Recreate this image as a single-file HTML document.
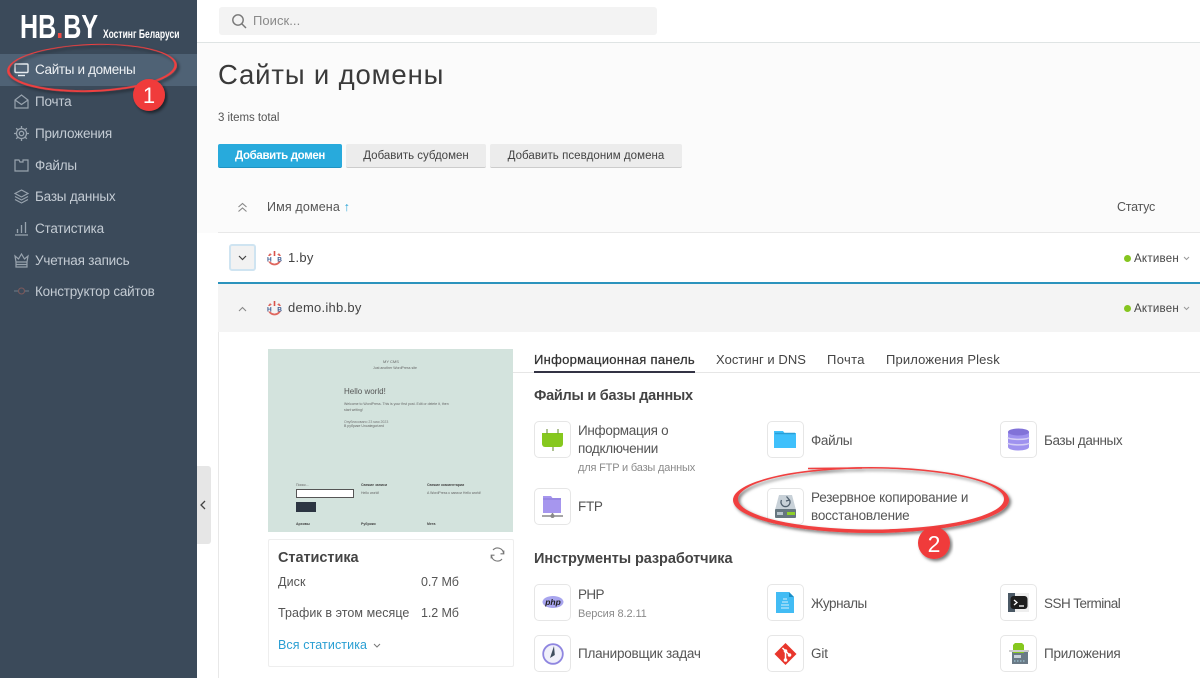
<!DOCTYPE html>
<html lang="ru"><head><meta charset="utf-8"><title>Сайты и домены</title>
<style>
html,body{margin:0;padding:0}
body{width:1200px;height:678px;overflow:hidden;position:relative;background:#fff;font-family:"Liberation Sans",sans-serif;color:#4b4b4b}
.a,.t{position:absolute}
.t{white-space:nowrap;font-size:13.5px;line-height:18px;color:#555;letter-spacing:-.3px}
.n{left:35px;color:#c3cbd3;font-size:13.5px;letter-spacing:-.2px}
.b{position:absolute;width:35px;height:35px;border:1px solid #e6e6e6;border-radius:5px;background:#fff}
.b svg{position:absolute;left:0;top:0}
.s{color:#8a8a8a;font-size:11px;letter-spacing:-.18px}
.h{font-size:14.5px;font-weight:bold;color:#444}
.btn{position:absolute;top:144px;height:24px;line-height:24px;text-align:center;font-size:11.5px;background:#ececec;border-bottom:1px solid #ccc;box-sizing:border-box;border-radius:2px;color:#444}
svg{display:block}
.ni{position:absolute;left:14px}
</style></head><body>
<div class="a" style="left:197px;top:0;width:1003px;height:233px;background:#fbfbfb"></div>
<div class="a" style="left:197px;top:0;width:1003px;height:42px;background:#fff;border-bottom:1px solid #dfe4e4"></div>
<div class="a" style="left:219px;top:7px;width:438px;height:28px;background:#f3f3f3;border-radius:3px"></div>
<svg class="a" style="left:231px;top:13px" width="16" height="16" viewBox="0 0 16 16" fill="none" stroke="#777" stroke-width="1.4"><circle cx="7" cy="7" r="5.2"/><path d="M11 11l4 4"/></svg>
<div class="t" style="left:253px;top:12px;color:#8a8a8a;font-size:13px;letter-spacing:.05px">Поиск...</div>

<!-- sidebar -->
<div class="a" style="left:0;top:0;width:197px;height:678px;background:#3b4a5a"></div>
<div class="a" style="left:0;top:54px;width:197px;height:32px;background:#4f6275"></div>
<div class="t" style="left:20px;top:9px;color:#fff;font-size:33px;line-height:36px;font-weight:bold;transform:scaleX(.76);transform-origin:0 0;letter-spacing:0">HB<span style="color:#ef4a43">.</span>BY</div>
<div class="t" style="left:103px;top:27px;color:#fff;font-size:12px;line-height:14px;font-weight:bold;transform:scaleX(.71);transform-origin:0 0;letter-spacing:0">Хостинг Беларуси</div>

<svg class="ni" style="top:63px" width="15" height="14" viewBox="0 0 15 14" fill="none" stroke="#e6ebef" stroke-width="1.4"><rect x="1" y="1" width="13" height="8.500" rx="1"/><path d="M4 12.500h7"/></svg>
<div class="t n" style="top:61px;color:#eef1f4;letter-spacing:-.35px">Сайты и домены</div>
<svg class="ni" style="top:94px" width="15" height="15" viewBox="0 0 15 15" fill="none" stroke="#98a3ae" stroke-width="1.2"><path d="M1 6l6.500-5L14 6v8H1zM1 6l6.500 4.500L14 6"/></svg>
<div class="t n" style="top:93px">Почта</div>
<svg class="ni" style="top:126px" width="15" height="15" viewBox="0 0 15 15" fill="none" stroke="#98a3ae" stroke-width="1.3"><circle cx="7.500" cy="7.500" r="2.200"/><circle cx="7.500" cy="7.500" r="5"/><path d="M7.500 0v2.500M7.500 12.500V15M0 7.500h2.500M12.500 7.500H15M2.200 2.200l1.800 1.800M11 11l1.800 1.800M2.200 12.800L4 11M11 4l1.800-1.800"/></svg>
<div class="t n" style="top:125px">Приложения</div>
<svg class="ni" style="top:158px" width="15" height="14" viewBox="0 0 15 14" fill="none" stroke="#98a3ae" stroke-width="1.2"><path d="M1 2h4l1 2h3V2h5v11H1z"/></svg>
<div class="t n" style="top:157px">Файлы</div>
<svg class="ni" style="top:189px" width="15" height="15" viewBox="0 0 15 15" fill="none" stroke="#98a3ae" stroke-width="1.2"><path d="M7.500 1L14 4.500 7.500 8 1 4.500zM1 7.500L7.500 11 14 7.500M1 10.500L7.500 14 14 10.500"/></svg>
<div class="t n" style="top:188px">Базы данных</div>
<svg class="ni" style="top:221px" width="15" height="15" viewBox="0 0 15 15" fill="none" stroke="#98a3ae" stroke-width="1.3"><path d="M1 14h13M3.500 12V8M7.500 12V4M11.500 12V1"/></svg>
<div class="t n" style="top:220px">Статистика</div>
<svg class="ni" style="top:253px" width="15" height="15" viewBox="0 0 15 15" fill="none" stroke="#98a3ae" stroke-width="1.2"><path d="M1 3l3.500 3L7.500 1l3 5L14 3l-1 6H2zM2 9v5h11V9M2 11.500h11"/></svg>
<div class="t n" style="top:252px">Учетная запись</div>
<svg class="ni" style="top:285px" width="15" height="12" viewBox="0 0 15 12" fill="none" stroke="#6f7c88" stroke-width="1.100"><path d="M0 6h4M11 6h4"/><circle cx="7.500" cy="6" r="3" stroke="#7c5a5c"/></svg>
<div class="t n" style="top:283px">Конструктор сайтов</div>

<!-- handle -->
<div class="a" style="left:197px;top:466px;width:14px;height:78px;background:#e6e6e6;border-radius:0 3px 3px 0"></div>
<svg class="a" style="left:200px;top:500px" width="6" height="10" viewBox="0 0 6 10" fill="none" stroke="#444" stroke-width="1.300"><path d="M5 1L1 5l4 4"/></svg>

<!-- heading -->
<div class="t" style="left:218px;top:58px;font-size:27.500px;line-height:34px;color:#3a3a3a;letter-spacing:.85px">Сайты и домены</div>
<div class="t" style="left:218px;top:109px;font-size:11.500px;color:#555;letter-spacing:-.05px">3 items total</div>
<div class="btn" style="left:218px;width:124px;background:#28aadc;color:#fff;font-weight:bold;border-bottom-color:#1f93c2;letter-spacing:-.35px">Добавить домен</div>
<div class="btn" style="left:346px;width:140px">Добавить субдомен</div>
<div class="btn" style="left:490px;width:192px;letter-spacing:.05px">Добавить псевдоним домена</div>

<!-- table -->
<svg class="a" style="left:237px;top:202px" width="11" height="11" viewBox="0 0 11 11" fill="none" stroke="#888" stroke-width="1.100"><path d="M1.500 5L5.500 1.500 9.500 5M1.500 9.500L5.500 6 9.500 9.500"/></svg>
<div class="t" style="left:267px;top:198px;font-size:12.500px;color:#555;letter-spacing:.15px">Имя домена <span style="color:#2aa3d5">↑</span></div>
<div class="t" style="left:1117px;top:198px;font-size:12.500px;color:#555;letter-spacing:-.25px">Статус</div>
<div class="a" style="left:218px;top:232px;width:982px;height:1px;background:#e8e8e8"></div>

<div class="a" style="left:229px;top:244px;width:27px;height:27px;background:#f2f2f2;border:2px solid #cfe4f1;border-radius:3px;box-sizing:border-box"></div>
<svg class="a" style="left:238px;top:255px" width="9" height="6" viewBox="0 0 9 6" fill="none" stroke="#444" stroke-width="1.200"><path d="M1 1l3.500 3.500L8 1"/></svg>
<svg class="a" style="left:267px;top:251px" width="15" height="15" viewBox="0 0 15 15"><circle cx="7.500" cy="7.500" r="6" fill="none" stroke="#e0675f" stroke-width="1.800"/><rect x="3.500" y="0" width="8" height="3" fill="#fff"/><rect x="6.700" y="0" width="1.600" height="5" fill="#d9534b"/><rect x="0" y="5" width="15" height="5.500" fill="#fff"/><text x="0" y="10.300" font-family="Liberation Sans" font-size="6.500" font-weight="bold" fill="#3c5a8f">H</text><text x="10.300" y="10.300" font-family="Liberation Sans" font-size="6.500" font-weight="bold" fill="#3c5a8f">B</text></svg>
<div class="t" style="left:288px;top:249px;font-size:13px;color:#444;letter-spacing:.25px">1.by</div>
<div class="a" style="left:1124px;top:255px;width:7px;height:7px;border-radius:50%;background:#85c51f"></div>
<div class="t" style="left:1134px;top:250px;font-size:11.500px;color:#444;letter-spacing:.25px">Активен</div>
<svg class="a" style="left:1183px;top:256px" width="7" height="5" viewBox="0 0 7 5" fill="none" stroke="#999"><path d="M1 1l2.500 2.500L6 1"/></svg>

<div class="a" style="left:218px;top:282px;width:982px;height:50px;background:#f4f4f4;border-top:2px solid #2b93bd;box-sizing:border-box"></div>
<div class="a" style="left:218px;top:332px;width:1px;height:346px;background:#e8e8e8"></div>
<svg class="a" style="left:238px;top:306px" width="9" height="6" viewBox="0 0 9 6" fill="none" stroke="#888" stroke-width="1.100"><path d="M1 5l3.500-3.500L8 5"/></svg>
<svg class="a" style="left:267px;top:301px" width="15" height="15" viewBox="0 0 15 15"><circle cx="7.500" cy="7.500" r="6" fill="none" stroke="#e0675f" stroke-width="1.800"/><rect x="3.500" y="0" width="8" height="3" fill="#f4f4f4"/><rect x="6.700" y="0" width="1.600" height="5" fill="#d9534b"/><rect x="0" y="5" width="15" height="5.500" fill="#f4f4f4"/><text x="0" y="10.300" font-family="Liberation Sans" font-size="6.500" font-weight="bold" fill="#3c5a8f">H</text><text x="10.300" y="10.300" font-family="Liberation Sans" font-size="6.500" font-weight="bold" fill="#3c5a8f">B</text></svg>
<div class="t" style="left:288px;top:299px;font-size:13px;color:#444;letter-spacing:.25px">demo.ihb.by</div>
<div class="a" style="left:1124px;top:305px;width:7px;height:7px;border-radius:50%;background:#85c51f"></div>
<div class="t" style="left:1134px;top:300px;font-size:11.500px;color:#444;letter-spacing:.25px">Активен</div>
<svg class="a" style="left:1183px;top:306px" width="7" height="5" viewBox="0 0 7 5" fill="none" stroke="#999"><path d="M1 1l2.500 2.500L6 1"/></svg>

<!-- preview -->
<div class="a" style="left:268px;top:349px;width:245px;height:183px;background:#d3e3dd;overflow:hidden">
 <div class="t" style="left:115px;top:10px;font-size:4px;line-height:6px;color:#666;letter-spacing:0">MY CMS</div>
 <div class="t" style="left:105px;top:16px;font-size:3.500px;line-height:6px;color:#666;letter-spacing:0">Just another WordPress site</div>
 <div class="t" style="left:76px;top:37px;font-size:8px;line-height:12px;color:#555;letter-spacing:0">Hello world!</div>
 <div class="t" style="left:76px;top:52px;font-size:3.500px;line-height:6px;color:#666;letter-spacing:0">Welcome to WordPress. This is your first post. Edit or delete it, then</div>
 <div class="t" style="left:76px;top:58px;font-size:3.500px;line-height:6px;color:#666;letter-spacing:0">start writing!</div>
 <div class="t" style="left:76px;top:70px;font-size:3.500px;line-height:6px;color:#777;letter-spacing:0">Опубликовано 23 мая 2023</div>
 <div class="t" style="left:76px;top:74px;font-size:3.500px;line-height:6px;color:#666;letter-spacing:0">В рубрике Uncategorized</div>
 <div class="t" style="left:28px;top:133px;font-size:3.500px;line-height:6px;color:#666;letter-spacing:0">Поиск...</div>
 <div class="a" style="left:28px;top:140px;width:58px;height:9px;background:#fff;border:1px solid #555;box-sizing:border-box"></div>
 <div class="a" style="left:28px;top:153px;width:20px;height:10px;background:#2c3542"></div>
 <div class="t" style="left:93px;top:133px;font-size:3.500px;line-height:6px;color:#444;font-weight:bold;letter-spacing:0">Свежие записи</div>
 <div class="t" style="left:93px;top:141px;font-size:3.500px;line-height:6px;color:#666;letter-spacing:0">Hello world!</div>
 <div class="t" style="left:159px;top:133px;font-size:3.500px;line-height:6px;color:#444;font-weight:bold;letter-spacing:0">Свежие комментарии</div>
 <div class="t" style="left:159px;top:141px;font-size:3.500px;line-height:6px;color:#666;letter-spacing:0">A WordPress к записи Hello world!</div>
 <div class="t" style="left:28px;top:172px;font-size:3.500px;line-height:6px;color:#444;font-weight:bold;letter-spacing:0">Архивы</div>
 <div class="t" style="left:93px;top:172px;font-size:3.500px;line-height:6px;color:#444;font-weight:bold;letter-spacing:0">Рубрики</div>
 <div class="t" style="left:159px;top:172px;font-size:3.500px;line-height:6px;color:#444;font-weight:bold;letter-spacing:0">Мета</div>
</div>

<!-- stats -->
<div class="a" style="left:268px;top:539px;width:244px;height:126px;border:1px solid #eee;border-radius:2px"></div>
<div class="t" style="left:278px;top:549px;font-size:14.500px;font-weight:bold;color:#444;letter-spacing:-.05px">Статистика</div>
<svg class="a" style="left:490px;top:547px" width="15" height="15" viewBox="0 0 15 15" fill="none" stroke="#777" stroke-width="1.100"><path d="M13.500 6.500A6 6 0 0 0 3 3M1.500 8.500A6 6 0 0 0 12 12"/><path d="M13.800 3.500v3.300h-3.300M1.200 11.500V8.200h3.300"/></svg>
<div class="t" style="left:278px;top:573px;font-size:12.500px;color:#555;letter-spacing:.1px">Диск</div>
<div class="t" style="left:421px;top:573px;font-size:12.500px;color:#555;letter-spacing:-.1px">0.7 Мб</div>
<div class="t" style="left:278px;top:604px;font-size:12.500px;color:#555;letter-spacing:.05px">Трафик в этом месяце</div>
<div class="t" style="left:421px;top:604px;font-size:12.500px;color:#555;letter-spacing:-.1px">1.2 Мб</div>
<div class="t" style="left:278px;top:636px;font-size:12.500px;color:#2a9fd3;letter-spacing:.1px">Вся статистика</div>
<svg class="a" style="left:373px;top:643px" width="8" height="5" viewBox="0 0 8 5" fill="none" stroke="#777"><path d="M1 1l3 3 3-3"/></svg>

<!-- tabs -->
<div class="a" style="left:513px;top:372px;width:687px;height:1px;background:#e6e6e6"></div>
<div class="t" style="left:534px;top:351px;font-size:13px;color:#333;letter-spacing:.3px;-webkit-text-stroke:.25px #333">Информационная панель</div>
<div class="a" style="left:534px;top:371px;width:161px;height:2px;background:#333344"></div>
<div class="t" style="left:716px;top:351px;font-size:13px;color:#444;letter-spacing:.05px">Хостинг и DNS</div>
<div class="t" style="left:827px;top:351px;font-size:13px;color:#444;letter-spacing:.35px">Почта</div>
<div class="t" style="left:886px;top:351px;font-size:13px;color:#444;letter-spacing:.15px">Приложения Plesk</div>

<div class="t h" style="left:534px;top:387px;letter-spacing:-.27px">Файлы и базы данных</div>

<!-- row 1 -->
<div class="b" style="left:534px;top:421px"><svg width="35" height="35" viewBox="0 0 35 35"><path d="M7 11h21v11a3 3 0 0 1-3 3H10a3 3 0 0 1-3-3z" fill="#86c81e"/><path d="M12 7v5M23 7v5M18 25v4" stroke="#7a9a4a" stroke-width="1.200" fill="none"/></svg></div>
<div class="t" style="left:578px;top:422px">Информация о</div>
<div class="t" style="left:578px;top:440px">подключении</div>
<div class="t s" style="left:578px;top:459px">для FTP и базы данных</div>

<div class="b" style="left:767px;top:421px"><svg width="35" height="35" viewBox="0 0 35 35"><path d="M6 9h9l1.500 2H28v15H6z" fill="#3fc0fb"/><path d="M7 11.500h20" stroke="#2a9fd6" stroke-width="1.500"/></svg></div>
<div class="t" style="left:811px;top:432px;letter-spacing:-.35px">Файлы</div>

<div class="b" style="left:1000px;top:421px"><svg width="35" height="35" viewBox="0 0 35 35"><path d="M7 10v15c0 2 4.700 3.500 10.500 3.500S28 27 28 25V10z" fill="#9f92ef"/><ellipse cx="17.500" cy="10" rx="10.500" ry="3.500" fill="#8172d8"/><path d="M7 15.500c1 2.500 20 2.500 21 0M7 21c1 2.500 20 2.500 21 0" stroke="#d6cff5" stroke-width="1.500" fill="none"/></svg></div>
<div class="t" style="left:1044px;top:432px;letter-spacing:-.4px">Базы данных</div>

<div class="b" style="left:534px;top:488px"><svg width="35" height="35" viewBox="0 0 35 35"><path d="M8 7h8l1.500 2H26v15H8z" fill="#a696ee"/><path d="M8 10h18" stroke="#8a7ad8"/><path d="M17.500 24v3M7 27h21" stroke="#888" stroke-width="1.500"/><circle cx="17.500" cy="27" r="2" fill="#888"/></svg></div>
<div class="t" style="left:578px;top:498px;letter-spacing:-.3px">FTP</div>

<div class="b" style="left:767px;top:488px"><svg width="35" height="35" viewBox="0 0 35 35"><path d="M11 6h13l4 15H7z" fill="#c8d1d8"/><rect x="7" y="20" width="21" height="9" rx="1" fill="#66767f"/><rect x="19" y="23" width="8" height="3" fill="#8ed02a"/><rect x="9" y="23" width="6" height="3" fill="#b9c5ce"/><path d="M13.500 11a4.500 4.500 0 1 0 8 0M18.500 7.500l3 3.500-3.500 1" stroke="#50606e" stroke-width="1.300" fill="none"/></svg></div>
<div class="t" style="left:811px;top:489px;letter-spacing:-.2px">Резервное копирование и</div>
<div class="t" style="left:811px;top:507px;letter-spacing:-.2px">восстановление</div>

<div class="t h" style="left:534px;top:550px;letter-spacing:-.08px">Инструменты разработчика</div>

<!-- row 3 -->
<div class="b" style="left:534px;top:584px"><svg width="35" height="35" viewBox="0 0 35 35"><ellipse cx="18" cy="17" rx="10.500" ry="6" fill="#a8a5ee"/><text x="18" y="20" text-anchor="middle" font-family="Liberation Sans" font-size="8.500" font-weight="bold" font-style="italic" fill="#222">php</text></svg></div>
<div class="t" style="left:578px;top:586px;letter-spacing:-.65px">PHP</div>
<div class="t s" style="left:578px;top:605px;letter-spacing:-.1px">Версия 8.2.11</div>

<div class="b" style="left:767px;top:584px"><svg width="35" height="35" viewBox="0 0 35 35"><path d="M8 7h13l5 5v16H8z" fill="#42bcf4"/><path d="M21 7l5 5h-5z" fill="#1c8fc7"/><path d="M15 14h4M14 17h6M13 20h8M13 23h8" stroke="#d8f1fd" stroke-width="1"/></svg></div>
<div class="t" style="left:811px;top:595px;letter-spacing:-.45px">Журналы</div>

<div class="b" style="left:1000px;top:584px"><svg width="35" height="35" viewBox="0 0 35 35"><rect x="7" y="8" width="21" height="19" fill="#eeeeee"/><rect x="7" y="8" width="7" height="19" fill="#4a5865"/><rect x="9.500" y="11" width="17" height="13" rx="3" fill="#1d1d1d"/><path d="M13 15l3 2.500-3 2.500" stroke="#fff" stroke-width="1.300" fill="none"/><path d="M18 21h5" stroke="#fff" stroke-width="1.300"/></svg></div>
<div class="t" style="left:1044px;top:595px;letter-spacing:-.5px">SSH Terminal</div>

<!-- row 4 -->
<div class="b" style="left:534px;top:635px"><svg width="35" height="35" viewBox="0 0 35 35"><circle cx="18" cy="18" r="9.800" fill="#f0f0fa" stroke="#8f86e0" stroke-width="1.800"/><path d="M19 10l.8 9-4.800 3z" fill="#3f4e5e"/></svg></div>
<div class="t" style="left:578px;top:645px;letter-spacing:-.22px">Планировщик задач</div>

<div class="b" style="left:767px;top:635px"><svg width="35" height="35" viewBox="0 0 35 35"><path d="M17.500 7l11 11-11 11-11-11z" fill="#e8362c"/><path d="M14.500 12l6 6M17.500 16v8" stroke="#fff" stroke-width="1.500"/><circle cx="17.500" cy="15" r="1.800" fill="#fff"/><circle cx="21.500" cy="19" r="1.800" fill="#fff"/><circle cx="17.500" cy="24" r="1.800" fill="#fff"/></svg></div>
<div class="t" style="left:811px;top:645px;letter-spacing:-.1px">Git</div>

<div class="b" style="left:1000px;top:635px"><svg width="35" height="35" viewBox="0 0 35 35"><rect x="11" y="16" width="16" height="12" fill="#6a7a86"/><path d="M14 7h7l2 2v8H12V9z" fill="#86c81e"/><path d="M8 15h20" stroke="#ccc" stroke-width="2"/><rect x="13" y="19" width="7" height="3" fill="#c8d2d8"/><path d="M13 25h12" stroke="#a8d8e8" stroke-dasharray="1.500 1.500"/></svg></div>
<div class="t" style="left:1044px;top:645px;letter-spacing:-.25px">Приложения</div>

<!-- annotations -->
<svg class="a" style="left:0;top:0;pointer-events:none" width="1200" height="678" viewBox="0 0 1200 678" fill="none">
 <defs><filter id="sh" x="-10%" y="-30%" width="120%" height="160%"><feDropShadow dx="2" dy="2" stdDeviation="1.500" flood-color="#000" flood-opacity=".55"/></filter></defs>
 <g filter="url(#sh)" transform="rotate(-2 92 68)">
  <path fill-rule="evenodd" fill="#f03f3f" d="M7 68a85 24 0 1 0 170 0a85 24 0 1 0-170 0zM9.500 67.500a82.500 22.500 0 1 0 165 0a82.500 22.500 0 1 0-165 0z"/>
 </g>
 <circle cx="149" cy="95" r="16" fill="#f03a3a" filter="url(#sh)"/>
 <g filter="url(#sh)">
  <path fill-rule="evenodd" fill="#f04040" d="M733 500a138 33 0 1 0 276 0a138 33 0 1 0-276 0zM738 499a133 30.500 0 1 0 266 0a133 30.500 0 1 0-266 0z"/>
  <path d="M808 468.500L862 468" stroke="#f04040" stroke-width="1.500"/>
 </g>
 <circle cx="934" cy="543" r="16" fill="#f03a3a" filter="url(#sh)"/>
 <text x="149" y="103" text-anchor="middle" font-family="Liberation Sans" font-size="22" fill="#fff">1</text>
 <text x="934" y="552" text-anchor="middle" font-family="Liberation Sans" font-size="23" fill="#fff">2</text>
</svg>
</body></html>
